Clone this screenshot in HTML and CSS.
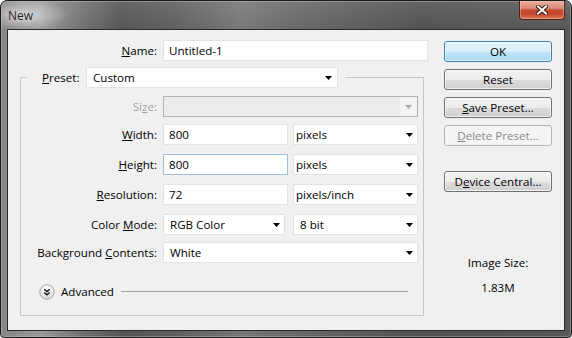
FILE: index.html
```html
<!DOCTYPE html>
<html>
<head>
<meta charset="utf-8">
<title>New</title>
<link rel="stylesheet" href="styles.css">
</head>
<body>
<div class="window">
  <div class="titlebar">
    <span class="title">New</span>
    <div class="close">
      <svg width="12" height="10" viewBox="0 0 12 10"><path d="M2 1.5 L10 8.5 M10 1.5 L2 8.5" stroke="#3a1710" stroke-width="4" stroke-linecap="square"/><path d="M2 1.5 L10 8.5 M10 1.5 L2 8.5" stroke="#ffffff" stroke-width="2" stroke-linecap="square"/></svg>
    </div>
  </div>
  <div class="client">
    <div class="form">
      <div class="name-row">
        <span class="name-label"><u>N</u>ame:</span>
        <div class="field w-name">Untitled-1</div>
      </div>
      <fieldset class="group">
        <legend class="legend">
          <span class="legend-label"><u>P</u>reset:</span>
          <div class="select w-preset"><span class="sel-text">Custom</span><svg class="arrow" width="7" height="4" viewBox="0 0 7 4"><path d="M0 0 H7 L3.5 4 Z" fill="#000"/></svg></div>
        </legend>
        <div class="rows">
          <div class="frow">
            <span class="flabel disabled">Si<u>z</u>e:</span>
            <div class="select disabled-sel w-full"><span class="sel-text"></span><span class="dis-btn"><svg width="7" height="4" viewBox="0 0 7 4"><path d="M0 0 H7 L3.5 4 Z" fill="#a9a9a9"/></svg></span></div>
          </div>
          <div class="frow tight">
            <span class="flabel"><u>W</u>idth:</span>
            <div class="field w-num">800</div>
            <div class="select unit w-unit"><span class="sel-text">pixels</span><svg class="arrow" width="7" height="4" viewBox="0 0 7 4"><path d="M0 0 H7 L3.5 4 Z" fill="#000"/></svg></div>
          </div>
          <div class="frow">
            <span class="flabel"><u>H</u>eight:</span>
            <div class="field focused w-num">800</div>
            <div class="select unit w-unit"><span class="sel-text">pixels</span><svg class="arrow" width="7" height="4" viewBox="0 0 7 4"><path d="M0 0 H7 L3.5 4 Z" fill="#000"/></svg></div>
          </div>
          <div class="frow">
            <span class="flabel"><u>R</u>esolution:</span>
            <div class="field w-num">72</div>
            <div class="select unit w-unit"><span class="sel-text">pixels/inch</span><svg class="arrow" width="7" height="4" viewBox="0 0 7 4"><path d="M0 0 H7 L3.5 4 Z" fill="#000"/></svg></div>
          </div>
          <div class="frow">
            <span class="flabel">Color <u>M</u>ode:</span>
            <div class="select w-mode"><span class="sel-text">RGB Color</span><svg class="arrow" width="7" height="4" viewBox="0 0 7 4"><path d="M0 0 H7 L3.5 4 Z" fill="#000"/></svg></div>
            <div class="select w-unit bits"><span class="sel-text">8 bit</span><svg class="arrow" width="7" height="4" viewBox="0 0 7 4"><path d="M0 0 H7 L3.5 4 Z" fill="#000"/></svg></div>
          </div>
          <div class="frow tight">
            <span class="flabel">Background <u>C</u>ontents:</span>
            <div class="select w-full"><span class="sel-text">White</span><svg class="arrow" width="7" height="4" viewBox="0 0 7 4"><path d="M0 0 H7 L3.5 4 Z" fill="#000"/></svg></div>
          </div>
        </div>
        <div class="advanced">
          <svg class="adv-icon" width="16" height="16" viewBox="0 0 16 16">
            <defs><linearGradient id="ag" x1="0" y1="0" x2="0" y2="1"><stop offset="0" stop-color="#ffffff"/><stop offset="1" stop-color="#d6d6d6"/></linearGradient></defs>
            <circle cx="8" cy="8" r="7.2" fill="url(#ag)" stroke="#a4a4a4" stroke-width="1"/>
            <path d="M5.3 5.2 L8 7.6 L10.7 5.2 M5.3 8.4 L8 10.8 L10.7 8.4" fill="none" stroke="#111" stroke-width="1.3"/>
          </svg>
          <span class="adv-text">Advanced</span>
          <span class="adv-line"></span>
        </div>
      </fieldset>
    </div>
    <div class="side">
      <div class="btn default">OK</div>
      <div class="btn">Reset</div>
      <div class="btn"><u>S</u>ave Preset...</div>
      <div class="btn disabled-btn"><u>D</u>elete Preset...</div>
      <div class="btn device">D<u>e</u>vice Central...</div>
      <div class="imgsize">Image Size:</div>
      <div class="imgval">1.83M</div>
    </div>
  </div>
</div>
</body>
</html>
```

FILE: styles.css
```css
html, body {
  margin: 0;
  padding: 0;
  background: #ffffff;
}
body {
  font-family: "Open Sans", "Noto Sans", sans-serif;
  font-size: 11.6px;
  color: #000;
}
u {
  text-decoration: underline;
  text-underline-offset: 1px;
}

.window {
  width: 572px;
  height: 338px;
  box-sizing: border-box;
  border: 1px solid #1a1a1a;
  border-radius: 7px 7px 4px 4px;
  background:
    radial-gradient(ellipse 44px 16px at 24px 14px, rgba(255,255,255,0.55), rgba(255,255,255,0) 100%),
    linear-gradient(180deg, rgba(255,255,255,0.10), rgba(255,255,255,0) 30px),
    linear-gradient(90deg, #858585 0px, #999 40px, #727272 80px, #555 120px, #5e5e5e 170px, #777 240px, #636363 320px, #525252 420px, #585858 572px);
  box-shadow: inset 0 0 0 1px rgba(190,190,190,0.45);
  display: flex;
  flex-direction: column;
  overflow: hidden;
}

.titlebar {
  height: 28px;
  flex: none;
  display: flex;
  align-items: flex-start;
  padding: 0 6px 0 7px;
}
.title {
  margin-top: 6px;
  font-size: 12px;
  color: #1e1e1e;
  text-shadow: 0 0 6px rgba(255,255,255,0.8);
}
.close {
  margin-left: auto;
  width: 46px;
  height: 19px;
  box-sizing: border-box;
  border: 1px solid #4a2018;
  border-top: none;
  border-radius: 0 0 4px 4px;
  background: linear-gradient(180deg, #e9b0a2 0%, #d98a77 40%, #c6482f 52%, #c44a30 75%, #db7a5c 100%);
  box-shadow: inset 0 0 0 1px rgba(255,200,180,0.45);
  display: flex;
  align-items: center;
  justify-content: center;
}

.client {
  flex: 1;
  margin: 0 6px 6px 6px;
  border: 1px solid #2a2a2a;
  background: #f0f0f0;
  display: flex;
  align-items: flex-start;
}

.form {
  width: 420px;
  flex: none;
}
.name-row {
  margin-top: 10px;
  display: flex;
  align-items: center;
  gap: 6px;
}
.name-label {
  width: 149px;
  text-align: right;
}

.field {
  height: 21px;
  box-sizing: border-box;
  border: 1px solid #e3e3e3;
  background: #ffffff;
  padding: 0 5px;
  display: flex;
  align-items: center;
}
.field.focused {
  border-color: #9fbfdf;
}
.w-name { width: 265px; }
.w-num { width: 125px; }

.select {
  height: 21px;
  box-sizing: border-box;
  border: 1px solid #e3e3e3;
  background: #ffffff;
  padding: 0 4px 0 6px;
  display: flex;
  align-items: center;
}
.sel-text {
  flex: 1;
}
.select.unit {
  padding-left: 2px;
}
.w-preset { width: 252px; padding-right: 5px; }
.w-full { width: 255px; }
.w-unit { width: 125px; }
.w-mode { width: 122px; }
.bits { margin-left: 3px; }

.disabled-sel {
  background: #ececec;
  border-color: #b3b3b3;
  padding-right: 0;
}
.dis-btn {
  width: 17px;
  height: 19px;
  background: #f3f3f3;
  display: flex;
  align-items: center;
  justify-content: center;
}

.group {
  margin: 6px 0 0 12px;
  width: 404px;
  box-sizing: border-box;
  border: 1px solid #c6c6c6;
  padding: 8px 0 16px 0;
  min-width: 0;
}
.legend {
  margin-left: 6px;
  padding: 0 7px 0 15px;
  display: flex;
  align-items: center;
  gap: 5px;
}
.legend-label {
  width: 39px;
}

.rows {
  display: flex;
  flex-direction: column;
  gap: 9px;
}
.frow {
  display: flex;
  align-items: center;
  gap: 5px;
  height: 21px;
}
.frow.tight {
  margin-top: -2px;
}
.flabel {
  width: 136px;
  margin-right: 1px;
  text-align: right;
}
.flabel.disabled {
  color: #a3a3a3;
}

.advanced {
  margin-top: 21px;
  height: 15px;
  padding-left: 18px;
  display: flex;
  align-items: center;
}
.adv-icon {
  flex: none;
}
.adv-text {
  margin-left: 6px;
}
.adv-line {
  flex: 1;
  height: 1px;
  background: #a2a2a2;
  margin: 0 15px 0 7px;
}

.side {
  margin-left: 16px;
  width: 108px;
  flex: none;
  padding-top: 11px;
  display: flex;
  flex-direction: column;
  gap: 7px;
}
.btn {
  height: 21px;
  box-sizing: border-box;
  border: 1px solid #707070;
  border-radius: 3px;
  background: linear-gradient(180deg, #f2f2f2 0%, #ebebeb 50%, #dddddd 51%, #cfcfcf 100%);
  box-shadow: inset 0 0 0 1px rgba(255,255,255,0.7);
  display: flex;
  align-items: center;
  justify-content: center;
  color: #000;
}
.btn.default {
  border-color: #3c7fb1;
  background: linear-gradient(180deg, #e8f5fc 0%, #d6eefb 50%, #bfe4f9 51%, #a9d9f4 100%);
  box-shadow: inset 0 0 0 1px rgba(255,255,255,0.6);
}
.btn.disabled-btn {
  border-color: #b1b5b8;
  background: #f4f4f4;
  color: #8a8a8a;
  box-shadow: none;
}
.btn.device {
  margin-top: 18px;
}
.imgsize {
  margin-top: 56px;
  text-align: center;
  line-height: 16px;
}
.imgval {
  margin-top: 2px;
  text-align: center;
  line-height: 16px;
}
```
